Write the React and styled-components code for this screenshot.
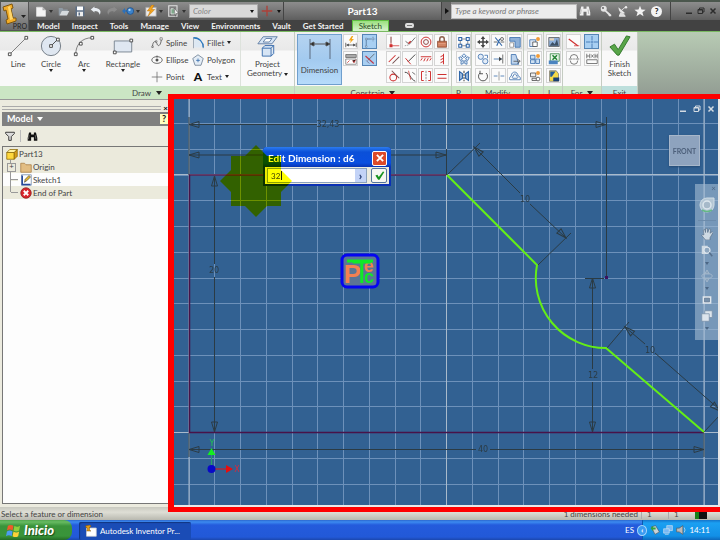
import styled, { createGlobalStyle, css } from "styled-components";

const blue = "#2f65a8";
const red = "#cf3030";
const dark = "#444444";

const iconShapes = {
  newFile: (
    <g>
      <path d="M2 3h8l4 4v8H2z" fill="#f4f4f4" stroke="#ddd" />
      <path d="M10 3v4h4" fill="#aaa" />
    </g>
  ),
  open: (
    <g>
      <path d="M1 4h5l1 2h6v2H5l-3 6H1z" fill="#8f9aa3" />
      <path d="M5 8h10l-3 6H2z" fill="#d5dade" />
    </g>
  ),
  save: (
    <g>
      <path d="M2 2h12v13H2z" fill="#5c6f86" />
      <path d="M4 2h8v5H4z" fill="#fff" />
      <path d="M4 9h8v6H4z" fill="#eee" />
      <path d="M6 10h2v4H6z" fill="#5c6f86" />
    </g>
  ),
  undo: (
    <path d="M6 2L1 6l5 4V8c4 0 6 1 7 5 3-6-1-9-7-9z" fill="#e8edf2" />
  ),
  redo: (
    <path d="M10 2l5 4-5 4V8c-4 0-6 1-7 5-3-6 1-9 7-9z" fill="#8c8c8c" />
  ),
  returnTo: (
    <g>
      <path d="M0 8l4-4v3h3v2H4v3z" fill="#2d70b8" />
      <circle cx="11" cy="8" r="4.5" fill="#3d84cc" stroke="#1a4f8c" />
      <circle cx="10" cy="6.5" r="1.5" fill="#b5d8f5" />
    </g>
  ),
  update: (
    <g>
      <path d="M1 3h14v12H1z" fill="#ececec" stroke="#999" />
      <path d="M9 0L3 8h4l-3 7 9-9H9l3-6z" fill="#f2a41f" stroke="#b36a00" strokeWidth=".6" />
    </g>
  ),
  select: (
    <g>
      <path d="M1 1h11v14H1z" fill="none" stroke="#e0e0e0" strokeWidth="1.5" />
      <path d="M4 5h5v7H4z" fill="#7ea78a" stroke="#eee" />
      <path d="M8 4l6 7-3 .3L10 15z" fill="#fff" stroke="#444" strokeWidth=".7" />
    </g>
  ),
  plus: <path d="M8 1v14M1 8h14" stroke="#ad4038" strokeWidth="1.8" />,
  binoculars: (
    <g>
      <path d="M3 2h3v3h4V2h3l2 8v4h-5V9H6v5H1v-4z" fill="currentColor" />
      <path d="M3 6l-1 6M12 6l1 6" stroke="#999" strokeWidth=".8" />
    </g>
  ),
  key: (
    <g>
      <circle cx="5" cy="5" r="4" fill="#e4e4e4" />
      <circle cx="4" cy="4" r="1.2" fill="#555" />
      <path d="M7 6l8 7v2h-3l-1-2-1-1-4-4z" fill="#e4e4e4" />
    </g>
  ),
  satellite: (
    <g>
      <path d="M2 3c0 6 4 9 9 8z" fill="#e8e8e8" />
      <path d="M6 7l5-4M5 10l-2 5h8l-3-4" stroke="#e8e8e8" fill="#ddd" strokeWidth="1.2" />
      <circle cx="12" cy="3" r="1.6" fill="#eee" />
    </g>
  ),
  star: (
    <path d="M8 1l2 5 5.500.300-4.300 3.500L12.700 15 8 12l-4.700 3 1.500-5.200L.500 6.300 6 6z" fill="#f2f2f2" />
  ),
  minimize: <path d="M2 11h12v3H2z" fill="currentColor" />,
  restore: (
    <path d="M5 5V2h9v8h-3M2 5h9v8H2zM2 6h9" fill="none" stroke="currentColor" strokeWidth="2" />
  ),
  close: <path d="M3 3l10 10M13 3L3 13" stroke="currentColor" strokeWidth="3" />,
  line: (
    <g fill="#fff" stroke={dark}>
      <path d="M3 21L21 3" stroke="#777" />
      <path d="M1.500 19.500h3v3h-3zM19.500 1.500h3v3h-3z" />
    </g>
  ),
  circle: (
    <g fill="#fff" stroke={dark}>
      <circle cx="12" cy="12" r="10.5" fill="#dfe7f1" stroke="#6c7680" />
      <path d="M12 12l7-7" />
      <path d="M10.500 10.500h3v3h-3zM18 3.500h3v3h-3z" />
    </g>
  ),
  arc: (
    <g fill="#fff" stroke={dark}>
      <path d="M3 21C3 11 9 3 21 3" fill="none" stroke="#777" />
      <path d="M1.500 19.500h3v3h-3zM19.500 1.500h3v3h-3zM7 8h3v3H7z" />
    </g>
  ),
  rectangle: (
    <g fill="#fff" stroke={dark}>
      <path d="M2.500 6.500h19v12h-19z" fill="#dfe7f1" stroke="#77828e" />
      <path d="M1.500 17.500h3v3h-3zM19.500 4.500h3v3h-3z" />
    </g>
  ),
  spline: (
    <g fill="#fff" stroke={dark}>
      <path d="M2 14C2 4 7 5 8 9s5 4 6-7" fill="none" />
      <path d="M1 12h2v2H1zM12 1h3v3h-3zM6 5h2v2H6z" strokeWidth=".7" />
    </g>
  ),
  ellipse: (
    <g stroke={dark} fill="none">
      <ellipse cx="8" cy="8" rx="7" ry="4.5" />
      <circle cx="8" cy="8" r="1.5" fill={dark} />
      <path d="M8 2v3" />
    </g>
  ),
  point: <path d="M8 1v14M1 8h14" stroke="#666" />,
  fillet: (
    <g fill="none">
      <path d="M3 3c7 1 10 6 10 11H3z" fill="#dde8f3" />
      <path d="M2 15V1h5M15 15V9" stroke="#8795a5" />
      <path d="M2 1c8 0 13 6 13 13" stroke="#2878c0" strokeWidth="1.8" />
    </g>
  ),
  polygon: (
    <g>
      <path d="M8 1l7 5-3 9H4L1 6z" fill="#e4edf6" stroke="#62748a" />
      <path d="M8 6v5M5.500 8.500h5" stroke={blue} />
    </g>
  ),
  project: (
    <g>
      <path d="M7 2h16l-6 8H1z" fill="#d7e5f5" stroke="#5878a0" />
      <path d="M10 4h7l-3 4H7z" fill="#fff" stroke="#5878a0" />
      <path d="M6 15h10v9H6zM6 15l3-3h10l-3 3M19 12v9l-3 3" fill="#d7e5f5" stroke={blue} />
    </g>
  ),
  dimension: (
    <g stroke="#555">
      <path d="M2 1v20M22 1v20" stroke="#687b92" strokeWidth="1.2" />
      <path d="M3 6h18" />
      <path d="M2 6l4-2v4zM22 6l-4-2v4z" fill="#222" />
    </g>
  ),
  autoDimension: (
    <g>
      <path d="M9 0L5 6h3l-2 4 6-6H9l2-4z" fill="#f3a619" />
      <path d="M1 9v6M15 9v6M2 12h12" stroke={dark} />
      <path d="M2 12l3-2v4zM14 12l-3-2v4z" fill={dark} />
    </g>
  ),
  showConstraints: (
    <g>
      <path d="M1 2h14v4H1z" fill="#aaa" stroke="#666" />
      <path d="M1 8h14v7H1z" fill="#fff" stroke="#777" />
      <path d="M3 13l3-3M10 10l2 3 2-4" stroke={red} />
    </g>
  ),
  inference: (
    <g>
      <path d="M3 15V4h6" fill="none" stroke="#4a6c92" />
      <path d="M2 3h2v2H2zM2 13h2v2H2z" fill="#fff" stroke="#4a6c92" strokeWidth=".7" />
      <path d="M12 1v6M9 4h6" stroke="#58708b" strokeDasharray="1.5 1" />
    </g>
  ),
  persistence: (
    <g fill="none">
      <path d="M5 10L14 1" stroke="#555" />
      <path d="M2 4l11 10" stroke="#c03848" strokeWidth="1.5" />
      <path d="M3 10l4 4" stroke="#6c5a80" />
    </g>
  ),
  coincident: (
    <g>
      <path d="M4 1v12h11" stroke={red} fill="none" />
      <path d="M2 11h4v4H2z" fill={red} />
      <path d="M4 1v8" stroke="#777" />
    </g>
  ),
  collinear: (
    <g>
      <path d="M2 7l5 4 8-9" stroke={dark} fill="none" />
      <path d="M6 10l3-3" stroke={red} strokeWidth="2" />
      <path d="M1 13l5-1" stroke="#888" strokeDasharray="2 1" />
    </g>
  ),
  concentric: (
    <g fill="none" stroke={red} strokeWidth="1.3">
      <circle cx="8" cy="8" r="6.5" />
      <circle cx="8" cy="8" r="3.2" stroke="#8c4545" />
    </g>
  ),
  lock: (
    <g>
      <path d="M5 8V4c0-4 6-4 6 0v4" fill="none" stroke="#8f6250" strokeWidth="2" />
      <path d="M2 7h12v8H2z" fill="#c67250" stroke="#8b4f38" />
      <path d="M3 10h10M3 12h10" stroke="#e8a88c" />
    </g>
  ),
  parallel: (
    <g strokeWidth="1.4">
      <path d="M1 12l9-9" stroke={red} />
      <path d="M6 14l9-9" stroke="#704848" />
    </g>
  ),
  perpendicular: (
    <g fill="none" strokeWidth="1.3">
      <path d="M5 12L15 2" stroke={dark} />
      <path d="M2 7l7 8" stroke={red} />
    </g>
  ),
  horizontal: (
    <path d="M1 5h14M1 10l2-3M5 11l2-4M9 11l2-4M13 10l2-3" stroke={red} strokeWidth="1.3" />
  ),
  vertical: (
    <path d="M10 1v14M10 3L6 5M10 7L6 9M10 11l-4 2" stroke={red} strokeWidth="1.3" />
  ),
  tangent: (
    <g fill="none" strokeWidth="1.4">
      <circle cx="7" cy="10" r="4.5" stroke={red} />
      <path d="M5 1l10 10" stroke="#815050" />
    </g>
  ),
  smooth: (
    <g fill="none">
      <path d="M1 3c7 0 7 9 14 12" stroke={dark} strokeWidth="1.3" />
      <path d="M6 1l3 12" stroke={red} />
      <path d="M11 3l4 3" stroke={dark} />
    </g>
  ),
  symmetric: (
    <g fill="none">
      <path d="M5 2H2v12h3M11 2h3v12h-3" stroke={red} strokeWidth="1.3" />
      <path d="M8 1v14" stroke="#777" strokeDasharray="3 1" />
    </g>
  ),
  equal: <path d="M2 6h12M2 11h12" stroke={red} strokeWidth="1.4" />,
  rectPattern: (
    <g fill="#f2f7ff" stroke={blue} strokeWidth="1.4">
      <path d="M3 4h10v9H3z" fill="none" stroke="#444" strokeWidth=".8" />
      <path d="M1 2h4v4H1zM11 2h4v4h-4zM1 11h4v4H1zM11 11h4v4h-4z" />
    </g>
  ),
  circPattern: (
    <g fill="#e9f1fa" stroke={blue}>
      <path d="M8 1l3 3-3 2-3-2zM1 6l3-1 2 3-3 2zM15 6l-3-1-2 3 3 2zM4 11l3-1v4l-3 1zM12 11l-3-1v4l3 1z" />
    </g>
  ),
  mirror: (
    <g fill="none" stroke={blue} strokeWidth="1.4">
      <path d="M2 2v12l4-3V5zM14 2v12l-4-3V5z" fill="#9bb9dc" />
      <path d="M8 1v14" stroke={dark} strokeDasharray="3 1" />
    </g>
  ),
  move: (
    <path
      d="M8 0l3 4H9v3h3V5l4 3-4 3V9H9v3h2l-3 4-3-4h2V9H4v2L0 8l4-3v2h3V4H5z"
      fill={dark}
    />
  ),
  trim: (
    <g stroke={dark} fill="none">
      <path d="M1 8h5M10 8h5" />
      <path d="M3 2l9 11M9 4l-4 9" stroke={blue} strokeWidth="1.5" />
      <circle cx="12" cy="4" r="2" />
    </g>
  ),
  scale: (
    <g fill="#8fb1d8" stroke={blue}>
      <path d="M1 2h14v13H8V7H1z" />
      <path d="M1 9h5v6H1z" fill="#fff" stroke="#888" />
    </g>
  ),
  copy: (
    <g fill="#e4edf8" stroke={blue}>
      <circle cx="5" cy="5" r="3.5" />
      <circle cx="11" cy="11" r="3.5" />
      <path d="M10 3h4v4" fill="none" />
    </g>
  ),
  extend: (
    <g fill="none">
      <path d="M1 8h11" stroke={blue} />
      <path d="M13 2v12" stroke={dark} />
      <path d="M12 8L8 5v6z" fill={dark} />
    </g>
  ),
  stretch: (
    <g>
      <path d="M3 2h6l4 13H3z" fill="#bdd3ed" stroke={blue} />
      <path d="M6 11h8M11 8l4 3-4 3" stroke={dark} fill="none" />
    </g>
  ),
  rotate: (
    <g fill="none" stroke={dark} strokeWidth="1.2">
      <path d="M4 4a6 6 0 1 0 8 0" />
      <path d="M4 1v4h4" />
    </g>
  ),
  split: (
    <g>
      <path d="M1 8h5M10 8h5" stroke={blue} />
      <path d="M8 2v12" stroke="#888" />
    </g>
  ),
  offset: (
    <g fill="none" stroke={blue}>
      <path d="M1 13h14c1-4-2-5-3-5 0-7-9-7-9 0-2 1-3 3-2 5z" />
      <path d="M5 11h6c2-1-1-3-1-3 0-4-5-3-4 0-2 0-2 2-1 3z" />
    </g>
  ),
  makePart: (
    <g>
      <path d="M1 5h8v9H1z" fill="#dfe8f5" stroke={blue} />
      <path d="M5 8h6v6H5z" fill="#fff" stroke={dark} />
      <circle cx="12" cy="4" r="2.6" fill="#f09b38" />
    </g>
  ),
  makeComponents: (
    <g>
      <path d="M2 3h6v5H2zM2 9h6v5H2zM9 8h5v6H9z" fill="#cde0f2" stroke={blue} />
      <circle cx="12" cy="4" r="2.6" fill="#f09b38" />
    </g>
  ),
  createBlock: (
    <g>
      <path d="M2 4h7v5H2zM4 11h8v3H4z" fill="#eee" stroke={dark} />
      <circle cx="12" cy="4" r="2.6" fill="#f09b38" />
      <circle cx="12" cy="12" r="2.5" fill="#fff" stroke={dark} />
    </g>
  ),
  image: (
    <g>
      <path d="M1 2h14v12H1z" fill="#8fb0d9" stroke="#555" />
      <path d="M2 13l4-5 3 3 3-7 2 9z" fill="#3e5064" />
      <path d="M2 3h6v3H2z" fill="#e8d6b8" />
    </g>
  ),
  points: (
    <g>
      <path d="M3 1h12v10H3z" fill="#e9f6e9" stroke="#287c35" />
      <path d="M6 3l6 6M12 3L6 9" stroke="#238233" strokeWidth="2" />
      <path d="M1 10h12v5H1z" fill="#4b84c0" />
    </g>
  ),
  acad: (
    <g>
      <path d="M2 1h9l3 4v10H2z" fill="#f5da48" stroke="#777" />
      <path d="M3 2h7L5 9H3z" fill="#245d9c" />
      <path d="M7 10h8v5H7z" fill="#183f73" />
    </g>
  ),
  construction: (
    <g>
      <path d="M1 4l12 9" stroke={red} strokeWidth="1.6" />
      <path d="M8 13h7" stroke={red} />
    </g>
  ),
  centerline: (
    <g fill="none" stroke="#555">
      <path d="M3 7a5 5 0 0 1 10 0M3 10a5 5 0 0 0 10 0" />
      <path d="M1 8h14" strokeDasharray="5 1 2 1" />
    </g>
  ),
  centerpoint: <path d="M8 0v6M8 10v6M0 8h6M10 8h6M8 7v2M7 8h2" stroke={blue} />,
  driven: (
    <g stroke="#555" fill="none">
      <path d="M1 1v6M5 1v6M1 4h4M7 2l3 4M10 2L7 6M12 1v6M15 1v6M12 4h3" />
      <path d="M1 9h14v5H1z" />
    </g>
  ),
  filter: <path d="M1 2h14v2l-5 5v6H6V9L1 4z" fill="#ddd" stroke="#333" strokeWidth="1.5" />,
  cube: (
    <g stroke="#8a6500">
      <path d="M1 6h10v9H1z" fill="#ffd83c" />
      <path d="M1 6l4-4h10l-4 4z" fill="#fff3a0" />
      <path d="M15 2v9l-4 4V6z" fill="#d69d19" />
    </g>
  ),
  folder: <path d="M1 3h5l2 2h7v10H1z" fill="#e2bd82" stroke="#a87c43" />,
  sketch: (
    <g>
      <path d="M2 1h13v14H2z" fill="#fff" stroke="#6f86a5" />
      <path d="M3 2v12h11" stroke="#26499c" fill="none" strokeWidth="2" />
      <path d="M6 11l1-4 5-5 2 2-5 5z" fill="#e9b72c" stroke="#554" />
    </g>
  ),
  end: (
    <g>
      <circle cx="8" cy="8" r="7" fill="#d9252b" stroke="#8c1c1f" />
      <path d="M5 5l6 6M11 5l-6 6" stroke="#fff" strokeWidth="2.4" />
    </g>
  ),
  check: (
    <path d="M1 13l5-3 4 6L19 1l4 1-12 20H9z" fill="#58a548" stroke="#2e7429" />
  ),
  okCheck: <path d="M2 8l3-1 2 3 6-8 2 1-7 11H6z" fill="#17921e" />,
  wheel: (
    <g>
      <path d="M8 1h7v7a7 7 0 1 1-7-7z" fill="#b4c6d4" stroke="#d0dde6" />
      <circle cx="8" cy="8" r="4" fill="#a6b9c9" stroke="#dce6ed" strokeWidth="1.5" />
      <path d="M3 13q5 3 10 0" stroke="#65b887" fill="none" strokeWidth="1.5" />
    </g>
  ),
  hand: (
    <path
      d="M4 9L3 3l2-1 1 4V1l2-1 1 6 2-5 2 1-1 5 3-2 1 1-4 7v3H6l-5-6 1-1z"
      fill="#cfdae3"
      stroke="#51667d"
      strokeWidth=".8"
    />
  ),
  zoom: (
    <g>
      <path d="M1 1h8v11H1z" fill="#cfdae3" />
      <circle cx="8" cy="7" r="4" fill="#8fa8c0" stroke="#dde6ee" strokeWidth="1.5" />
      <path d="M11 10l4 5" stroke="#56708c" strokeWidth="2" />
    </g>
  ),
  orbit: (
    <g fill="none" stroke="#a9bccd">
      <ellipse cx="8" cy="8" rx="7" ry="3" />
      <path d="M8 0l3 5H5zM8 16l3-5H5z" fill="#8ba4bd" />
    </g>
  ),
  lookAt: (
    <g>
      <path d="M1 2h14v12H1z" fill="#e1e7ed" />
      <path d="M4 5h8v6H4z" fill="#7891ab" stroke="#536b86" />
    </g>
  ),
  viewBox: (
    <g fill="#dde5ec" stroke="#788fa7">
      <path d="M5 1h10v9H5z" />
      <path d="M1 5h10v10H1z" />
    </g>
  ),
  windows: (
    <g>
      <path d="M2 3q3-2 6 0L7 8Q4 6 1 8z" fill="#f05a2a" />
      <path d="M9 3q3 2 6 0l-1 5q-3 2-6 0z" fill="#8fd03b" />
      <path d="M1 9q3-2 6 0l-1 5q-3-2-6 0z" fill="#4c9bf2" />
      <path d="M8 9q3 2 6 0l-1 5q-3 2-6 0z" fill="#fbd13a" />
    </g>
  ),
  inventor: (
    <g>
      <path d="M2 4h13v11H2z" fill="#fff" stroke="#ccc" />
      <path d="M1 1l6-1 1 2-2 1v4l2 1H2l1-1V4L1 3z" fill="#e09a16" stroke="#7c4d08" strokeWidth=".6" />
    </g>
  ),
  device: (
    <g>
      <path d="M2 3l7-2 6 10-7 4z" fill="#c8d3d8" stroke="#4d5962" />
      <path d="M1 5l4-4v3h4v3H5v3z" fill="#35a33d" />
    </g>
  ),
  network: (
    <g fill="#78b9f5" stroke="#d6e5ef">
      <path d="M6 1h9v8H6z" />
      <path d="M1 6h9v7H1zM3 15h6" />
    </g>
  ),
  volume: (
    <g>
      <path d="M1 5h4l6-4v14l-6-4H1z" fill="#bbb" stroke="#555" />
      <path d="M13 4q3 4 0 8" stroke="#eee" fill="none" />
    </g>
  ),
};

const Icon = ({ name, size = 12, box = 16 }) => (
  <Svg width={size} height={size} viewBox={`0 0 ${box} ${box}`} aria-hidden="true">
    {iconShapes[name]}
  </Svg>
);

const tabs = ["Model", "Inspect", "Tools", "Manage", "View", "Environments", "Vault", "Get Started"];

const quickTools = [
  ["newFile", true],
  ["open"],
  ["save"],
  ["undo"],
  ["redo"],
  ["returnTo", true],
  ["update", true],
  ["select", true],
];

const constraints = [
  "coincident", "collinear", "concentric", "lock",
  "parallel", "perpendicular", "horizontal", "vertical",
  "tangent", "smooth", "symmetric", "equal",
];

const modifyTools = [
  "move", "trim", "scale",
  "copy", "extend", "stretch",
  "rotate", "split", "offset",
];

const ToolGrid = ({ names, columns, gap, active }) => (
  <Tools $columns={columns} $gap={gap}>
    {names.map((name) => (
      <Tool key={name} aria-label={name} $active={name === active}>
        <Icon name={name} />
      </Tool>
    ))}
  </Tools>
);

const TitleBar = () => (
  <Title>
    <QuickAccess>
      {quickTools.map(([name, more]) => (
        <QuickButton key={name} aria-label={name} $more={more}>
          <Icon name={name} />
          {more && <Caret $color="#333" />}
        </QuickButton>
      ))}
    </QuickAccess>
    <ColorBox>
      <select aria-label="Color" defaultValue="Color">
        <option>Color</option>
      </select>
      <Caret $color="#111" />
    </ColorBox>
    <QuickEnd>
      <Icon name="plus" />
      <Caret $color="#111" />
    </QuickEnd>
    <DocumentName>Part13</DocumentName>
    <SearchArrow aria-label="Expand search" />
    <Search type="search" aria-label="Search help" placeholder="Type a keyword or phrase" />
    <HelpTools>
      {["binoculars", "key", "satellite", "star"].map((name) => (
        <PlainButton key={name} aria-label={name}>
          <Icon name={name} />
        </PlainButton>
      ))}
      <HelpButton>?</HelpButton>
    </HelpTools>
    <WindowButtons>
      {["minimize", "restore", "close"].map((name) => (
        <PlainButton key={name} aria-label={name}>
          <Icon name={name} size={8} />
        </PlainButton>
      ))}
    </WindowButtons>
  </Title>
);

const Ribbon = () => (
  <RibbonBar>
    <Panel $width={295}>
      <PanelBody $pad="0">
        <BigTool $width={36}>
          <Icon name="line" size={22} box={24} />
          Line
        </BigTool>
        <BigTool $width={30}>
          <Icon name="circle" size={22} box={24} />
          Circle
          <Caret $color="#222" />
        </BigTool>
        <BigTool $width={36}>
          <Icon name="arc" size={22} box={24} />
          Arc
          <Caret $color="#222" />
        </BigTool>
        <BigTool $width={42}>
          <Icon name="rectangle" size={22} box={24} />
          Rectangle
          <Caret $color="#222" />
        </BigTool>
        <SmallTools>
          <SmallTool><Icon name="spline" />Spline</SmallTool>
          <SmallTool><Icon name="fillet" />Fillet <Caret $color="#222" /></SmallTool>
          <SmallTool><Icon name="ellipse" />Ellipse</SmallTool>
          <SmallTool><Icon name="polygon" />Polygon</SmallTool>
          <SmallTool><Icon name="point" />Point</SmallTool>
          <SmallTool><LetterIcon>A</LetterIcon>Text <Caret $color="#222" /></SmallTool>
        </SmallTools>
        <ProjectTool>
          <Icon name="project" size={22} box={25} />
          <span>Project</span>
          <span>Geometry <Caret $color="#222" /></span>
        </ProjectTool>
      </PanelBody>
      <PanelTitle>Draw <Caret $color="#222" $large /></PanelTitle>
    </Panel>
    <Panel $width={157}>
      <PanelBody $pad="2px 2px 0 2px">
        <DimensionTool>
          <Icon name="dimension" size={24} box={24} />
          Dimension
        </DimensionTool>
        <Tools $columns={1} $gap={2}>
          <Tool aria-label="Automatic dimension"><Icon name="autoDimension" /></Tool>
          <Tool aria-label="Show constraints"><Icon name="showConstraints" /></Tool>
        </Tools>
        <Tools $columns={1} $gap={2} $left={4}>
          <Tool $active aria-label="Inference"><Icon name="inference" /></Tool>
          <Tool $active aria-label="Persistence"><Icon name="persistence" /></Tool>
        </Tools>
        <Spacer />
        <ToolGrid names={constraints} columns={4} gap={1} />
      </PanelBody>
      <PanelTitle>Constrain <Caret $color="#222" $large /></PanelTitle>
    </Panel>
    <Panel $width={20}>
      <PanelBody $pad="2px 0 0 3px">
        <ToolGrid names={["rectPattern", "circPattern", "mirror"]} columns={1} gap={1} />
      </PanelBody>
      <PanelTitle $start>P</PanelTitle>
    </Panel>
    <Panel $width={52}>
      <PanelBody $pad="2px 0 0 2px">
        <ToolGrid names={modifyTools} columns={3} gap={1} />
      </PanelBody>
      <PanelTitle>Modify</PanelTitle>
    </Panel>
    <Panel $width={20}>
      <PanelBody $pad="2px 0 0 2px">
        <ToolGrid names={["makePart", "makeComponents", "createBlock"]} columns={1} gap={1} />
      </PanelBody>
      <PanelTitle $start>L</PanelTitle>
    </Panel>
    <Panel $width={19}>
      <PanelBody $pad="2px 0 0 1px">
        <ToolGrid names={["image", "points", "acad"]} columns={1} gap={1} />
      </PanelBody>
      <PanelTitle $start>I</PanelTitle>
    </Panel>
    <Panel $width={39}>
      <PanelBody $pad="2px 0 0 2px">
        <ToolGrid
          names={["construction", "centerpoint", "centerline", "driven"]}
          columns={2}
          gap={3}
          active="centerpoint"
        />
      </PanelBody>
      <PanelTitle>For <Caret $color="#222" $large /></PanelTitle>
    </Panel>
    <Panel $width={36} $exit>
      <PanelBody $pad="0">
        <BigTool $width={36}>
          <Icon name="check" size={22} box={24} />
          <span>Finish</span>
          <span>Sketch</span>
        </BigTool>
      </PanelBody>
      <PanelTitle>Exit</PanelTitle>
    </Panel>
  </RibbonBar>
);

const ModelBrowser = () => (
  <Browser>
    <Grip>
      <i />
      <button aria-label="Close browser">×</button>
    </Grip>
    <BrowserTitle>
      Model <Caret $color="#fff" $large />
      <HelpTag aria-label="Help">?</HelpTag>
    </BrowserTitle>
    <BrowserTools>
      <PlainButton aria-label="Filter"><Icon name="filter" size={10} /></PlainButton>
      <Divider />
      <PlainButton aria-label="Find"><Icon name="binoculars" size={11} /></PlainButton>
    </BrowserTools>
    <Tree>
      <TreeItem $root $shade><Icon name="cube" />Part13</TreeItem>
      <TreeItem $shade><Branch $expand />
        <Icon name="folder" />Origin</TreeItem>
      <TreeItem><Branch />
        <Icon name="sketch" />Sketch1</TreeItem>
      <TreeItem $shade><Branch $last />
        <Icon name="end" />End of Part</TreeItem>
    </Tree>
  </Browser>
);

const gridStep = 25.75;
const columns = Array.from({ length: 21 }, (_, i) => 189 + i * gridStep);
const rows = Array.from({ length: 15 }, (_, i) => 123.5 + i * gridStep);

const Arrow = ({ x, y, angle }) => (
  <path d="M0 0L-10-3V3Z" fill="none" transform={`translate(${x} ${y}) rotate(${angle})`} />
);

const Drawing = () => (
  <DrawingSvg role="img" aria-label="Sketch geometry">
    <g transform="translate(-174 -99)" fill="none">
      <g stroke="#6d91ba" shapeRendering="crispEdges">
        {columns.map((x) => (
          <path key={x} d={`M${x} 99V900`} />
        ))}
        {rows.map((y) => (
          <path key={y} d={`M174 ${y}H2000`} />
        ))}
      </g>
      <g stroke="#a9bacb">
        <path d="M189 99V900M446.500 99V900M704 99V900M174 174.500H2000M174 432.500H2000" />
      </g>
      <g stroke="#2b3b44">
        <path d="M189 124.500H317M339 124.500H606M189 117V175M606.500 117V278" />
        <path d="M189 155H446M446.500 149V175" />
        <path d="M214.500 177V264M214.500 277V432" />
        <path d="M189 449.500H476M490 449.500H704M189 433V457M704 433V457" />
        <path d="M475 148L520 193M530 204L566 238M447 175L480 143M538 265L571 233" />
        <path d="M592.500 278V369M592.500 382V432M585 278.500H604" />
        <path d="M625 327L645 344M655 353L720 410M607 348L629 322M704 432L720 415" />
        <Arrow x={189} y={124.5} angle={180} />
        <Arrow x={606} y={124.5} angle={0} />
        <Arrow x={189} y={155} angle={180} />
        <Arrow x={446} y={155} angle={0} />
        <Arrow x={214.5} y={176} angle={-90} />
        <Arrow x={214.5} y={432} angle={90} />
        <Arrow x={189} y={449.5} angle={180} />
        <Arrow x={704} y={449.5} angle={0} />
        <Arrow x={474} y={147} angle={225} />
        <Arrow x={566} y={238} angle={45} />
        <Arrow x={592.5} y={278} angle={-90} />
        <Arrow x={592.5} y={432} angle={90} />
        <Arrow x={625} y={327} angle={221} />
        <Arrow x={720} y={411} angle={41} />
      </g>
      <path d="M446 175H189.500V432.500H704" stroke="#481348" strokeWidth="1.5" />
      <path
        d="M447 175L537 265A70 70 0 0 0 606 348L704 432"
        stroke="#64ee16"
        strokeWidth="2"
      />
      <path d="M605 276h3v3h-3z" fill="#3c1360" />
      <g fill="#2b3b44" fontSize="8" textAnchor="middle" fontFamily="DejaVu Sans, sans-serif">
        <text x="328" y="127">32,43</text>
        <text x="214" y="273">20</text>
        <text x="525" y="202">10</text>
        <text x="593" y="378">12</text>
        <text x="650" y="353">10</text>
        <text x="483" y="452">40</text>
      </g>
      <path d="M211.500 466V454" stroke="#25a06a" />
      <path d="M211.500 448l4 7h-8z" fill="#13ef20" />
      <path d="M214 469h12" stroke="#e11" />
      <path d="M226 465l7 4-7 4z" fill="#e80e0e" />
      <circle cx="211.5" cy="469" r="4" fill="#0808c8" />
      <g fontSize="8" textAnchor="middle" fontFamily="DejaVu Sans, sans-serif">
        <text x="212" y="446" fill="#1fc850">Y</text>
        <text x="237" y="472" fill="#d8283c">X</text>
      </g>
      <rect x="342" y="255" width="36" height="32" rx="5" fill="#5c7595" stroke="#0505f0" strokeWidth="3" />
      <g fontFamily="Liberation Sans, sans-serif" fontWeight="700">
        <text x="344" y="283" fontSize="26" fill="#f58052">P</text>
        <text x="364" y="272" fontSize="18" fill="#f58052">e</text>
        <text x="352" y="283" fontSize="32" fontWeight="400" fill="#10ea28">T</text>
        <text x="364" y="283" fontSize="18" fill="#10ea28">c</text>
      </g>
      <path d="M347 261H373" stroke="#10ea28" strokeWidth="3" />
    </g>
  </DrawingSvg>
);

const Canvas = () => (
  <CanvasArea>
    <Drawing />
    <ViewButtons>
      {["minimize", "restore", "close"].map((name) => (
        <PlainButton key={name} aria-label={`${name} view`}>
          <Icon name={name} size={8} />
        </PlainButton>
      ))}
    </ViewButtons>
    <ViewCube>FRONT</ViewCube>
    <NavBar>
      <small>×</small>
      <Icon name="wheel" size={16} />
      <hr />
      <Icon name="hand" />
      <Icon name="zoom" />
      <Caret $color="#4c6684" />
      <Icon name="orbit" />
      <Caret $color="#4c6684" />
      <Icon name="lookAt" size={10} />
      <Icon name="viewBox" />
      <Caret $color="#4c6684" />
    </NavBar>
    <Dialog role="dialog" aria-label="Edit Dimension">
      <DialogTitle>
        Edit Dimension : d6
        <CloseDialog type="button" aria-label="Close">
          <Icon name="close" size={10} />
        </CloseDialog>
      </DialogTitle>
      <DialogBody>
        <ValueBox>
          <input aria-label="Dimension value" defaultValue="32" />
          <i />
          <button type="button" aria-label="More values">›</button>
        </ValueBox>
        <Accept type="button" aria-label="Accept">
          <Icon name="okCheck" size={11} />
        </Accept>
      </DialogBody>
    </Dialog>
    <Highlight width="72" height="72" viewBox="0 0 72 72" aria-hidden="true">
      <path d="M11 11H61V61H11ZM36 0L72 36L36 72L0 36Z" fill="#ff0" />
    </Highlight>
  </CanvasArea>
);

export default function App() {
  return (
    <Screen>
      <GlobalStyle />
      <Header>
        <AppButton aria-label="Application menu">
          <svg width="28" height="31" viewBox="0 0 28 31" aria-hidden="true">
            <path d="M2 5l9-3 1 4-2 1 2 9 3 0v3l-9 3-1-4 2-1-2-9-2 1z" fill="#f2ad28" stroke="#7d560f" />
            <path d="M7 5l2-1 3 13-3 1z" fill="#ffd66b" />
            <path d="M20 13h5l-2.500 3z" fill="#222" />
          </svg>
          <span>PRO</span>
        </AppButton>
        <HeaderRows>
          <TitleBar />
          <Tabs>
            {tabs.map((tab) => (
              <Tab key={tab}>{tab}</Tab>
            ))}
            <Tab $current>Sketch</Tab>
            <RibbonToggle aria-label="Minimize ribbon" />
          </Tabs>
        </HeaderRows>
      </Header>
      <Ribbon />
      <Workspace>
        <ModelBrowser />
        <Canvas />
        <Frame />
      </Workspace>
      <Status>
        <span>Select a feature or dimension</span>
        <Needed>1 dimensions needed</Needed>
        <Count>1</Count>
        <Count>1</Count>
        <Meter />
      </Status>
      <Taskbar>
        <Start><Icon name="windows" size={15} />Inicio</Start>
        <Task><Icon name="inventor" />Autodesk Inventor Pr...</Task>
        <Language>ES</Language>
        <Tray>
          <TrayArrow aria-label="Show hidden icons">‹</TrayArrow>
          <Icon name="device" size={10} />
          <Icon name="network" size={10} />
          <Icon name="volume" size={10} />
          <time>14:11</time>
        </Tray>
      </Taskbar>
    </Screen>
  );
}

const GlobalStyle = createGlobalStyle`
  * {
    box-sizing: border-box;
  }
  body {
    margin: 0;
    font-family: Lato, "Liberation Sans", sans-serif;
    font-size: 8px;
    line-height: 10px;
    color: #444;
  }
  button, input, select {
    font: inherit;
    color: inherit;
    margin: 0;
    padding: 0;
    border: 0;
    background: none;
  }
`;

const Svg = styled.svg`
  display: block;
  flex: none;
`;

const Screen = styled.div`
  min-height: 100vh;
  display: flex;
  flex-direction: column;
  background: #ecebdf;
  overflow: hidden;
`;

const Caret = styled.i`
  flex: none;
  display: inline-block;
  border: solid transparent;
  border-width: ${(p) => (p.$large ? "4px 3px 0" : "3px 2px 0")};
  border-top-color: ${(p) => p.$color};
`;

const PlainButton = styled.button`
  display: flex;
  align-items: center;
  justify-content: center;
`;

const Header = styled.header`
  display: flex;
  height: 32px;
  background: #424242;
  border-bottom: 1px solid #79b961;
`;

const AppButton = styled.button`
  width: 29px;
  flex: none;
  position: relative;
  border: 1px solid #555;
  border-top: 2px solid #4b574d;
  background: linear-gradient(#adadad, #6a6a6a);
  overflow: hidden;

  svg {
    display: block;
  }
  span {
    position: absolute;
    right: 1px;
    bottom: 0;
    font-size: 7px;
    line-height: 8px;
    color: #222;
  }
`;

const HeaderRows = styled.div`
  flex: 1;
  min-width: 0;
`;

const Title = styled.div`
  height: 20px;
  display: flex;
  align-items: center;
  border-top: 2px solid #4b574d;
  background: linear-gradient(#8d8d8d, #5e5e5e);
  color: #333;
`;

const QuickAccess = styled.div`
  display: flex;
  align-items: center;
  gap: 3px;
  width: 160px;
  padding-left: 6px;
`;

const QuickButton = styled(PlainButton)`
  gap: 2px;
  width: ${(p) => (p.$more ? "20px" : "13px")};
  justify-content: flex-start;
`;

const ColorBox = styled.label`
  display: flex;
  align-items: center;
  width: 69px;
  height: 14px;
  padding-right: 3px;
  background: #d9d9d9;
  border: 1px solid #aaa;

  select {
    flex: 1;
    padding-left: 3px;
    appearance: none;
    font-style: italic;
    color: #888;
  }
`;

const QuickEnd = styled.div`
  display: flex;
  align-items: center;
  align-self: stretch;
  gap: 4px;
  width: 26px;
  padding-left: 3px;
  border-right: 1px solid #444;
`;

const DocumentName = styled.h1`
  flex: 1;
  margin: 0;
  text-align: center;
  color: #fff;
  font-size: 10px;
  line-height: 12px;
`;

const SearchArrow = styled.button`
  align-self: stretch;
  width: 10px;
  background: #666;
  border-left: 1px solid #444;

  &::after {
    content: "";
    display: block;
    margin-left: 3px;
    width: 0;
    border: solid transparent;
    border-width: 3px 0 3px 4px;
    border-left-color: #111;
  }
`;

const Search = styled.input`
  width: 126px;
  height: 15px;
  padding-left: 3px;
  background: #ececec;
  border: 1px solid #bbb;
  font-style: italic;

  &::placeholder {
    color: #777;
    opacity: 1;
  }
`;

const HelpTools = styled.div`
  display: flex;
  align-items: center;
  align-self: stretch;
  gap: 5px;
  width: 94px;
  padding-left: 2px;
  color: #eee;
  border-right: 1px solid #444;

  button:first-child {
    margin-right: 4px;
  }
`;

const HelpButton = styled.button`
  width: 11px;
  height: 11px;
  border-radius: 50%;
  background: #f4f4f4;
  color: #222;
  font-weight: 900;
`;

const WindowButtons = styled.div`
  display: flex;
  gap: 4px;
  padding: 0 3px 0 14px;
  color: #2c2c2c;
  justify-content: flex-end;
`;

const Tabs = styled.nav`
  display: flex;
  height: 11px;
  padding-left: 2px;
`;

const Tab = styled.button`
  padding: 0 6px;
  color: #f2f2f2;
  font-weight: 700;
  line-height: 10px;
  white-space: nowrap;

  ${(p) =>
    p.$current &&
    css`
      margin-left: 2px;
      color: #2c4a25;
      font-weight: 400;
      background: linear-gradient(#9ae07e, #d9f3cf);
      border: 1px solid #5fbf40;
      border-bottom: 0;
    `}
`;

const RibbonToggle = styled.button`
  align-self: center;
  margin-left: 16px;
  width: 9px;
  height: 5px;
  border: 2px solid #ddd;
  border-radius: 2px;
  background: #777;
`;

const RibbonBar = styled.section`
  display: flex;
  height: 67px;
  background: linear-gradient(#b8cbb4, #909a91);
  white-space: nowrap;
`;

const PanelTitle = styled.h2`
  display: flex;
  flex: none;
  align-items: center;
  justify-content: ${(p) => (p.$start ? "flex-start" : "center")};
  gap: 5px;
  height: 13px;
  margin: 0;
  padding: 0 4px;
  font-size: 8px;
  font-weight: 400;
`;

const Panel = styled.div`
  flex: none;
  display: flex;
  flex-direction: column;
  width: ${(p) => p.$width}px;
  background: linear-gradient(#f0f0f0, #e9e9e9 18px, #f9f9f9 19px);
  border-right: 1px solid #c5ccc2;

  ${PanelTitle} {
    background: ${(p) => (p.$exit ? "#bddfdc" : "#cbe6c4")};
  }
`;

const PanelBody = styled.div`
  display: flex;
  flex: 1;
  padding: ${(p) => p.$pad};
`;

const BigTool = styled.button`
  display: flex;
  flex-direction: column;
  align-items: center;
  width: ${(p) => p.$width}px;
  padding-top: 3px;
  line-height: 9px;

  svg {
    margin-bottom: 3px;
  }
`;

const SmallTools = styled.div`
  display: grid;
  grid-template-columns: 41px 48px;
  grid-auto-rows: 17px;
  align-content: start;
  padding: 2px 0 0 7px;
`;

const SmallTool = styled.button`
  display: flex;
  align-items: center;
  gap: 3px;
`;

const LetterIcon = styled.b`
  width: 12px;
  font-size: 12px;
  font-weight: 900;
  color: #111;
`;

const ProjectTool = styled.button`
  display: flex;
  flex-direction: column;
  align-items: center;
  flex: 1;
  padding-top: 3px;
  line-height: 9px;
  border-left: 1px solid #dde2dc;

  svg {
    margin-bottom: 3px;
  }
`;

const DimensionTool = styled.button`
  display: flex;
  flex-direction: column;
  align-items: center;
  gap: 3px;
  width: 45px;
  height: 51px;
  padding-top: 3px;
  border: 1px solid #6f9fce;
  background: linear-gradient(#b5d3f0, #a3caef 50%, #b6dbfa);
`;

const Tools = styled.div`
  display: grid;
  grid-template-columns: repeat(${(p) => p.$columns}, 15px);
  grid-auto-rows: 15px;
  align-content: start;
  gap: 2px ${(p) => p.$gap}px;
  margin-left: ${(p) => p.$left || 1}px;
`;

const Tool = styled(PlainButton)`
  background: ${(p) => (p.$active ? "#a8cff2" : "#fbfbfb")};
  border: 1px solid ${(p) => (p.$active ? "#5585b5" : "#d4d4d4")};
`;

const Spacer = styled.div`
  flex: 1;
`;

const Workspace = styled.main`
  flex: 1;
  display: flex;
  position: relative;
`;

const Browser = styled.aside`
  display: flex;
  flex-direction: column;
  width: 168px;
  padding: 4px 0 3px 2px;
  border-top: 1px solid #999;
`;

const Grip = styled.div`
  display: flex;
  align-items: center;
  gap: 2px;
  height: 8px;

  i {
    flex: 1;
    height: 4px;
    border: solid #aaa;
    border-width: 1px 0;
  }
  button {
    color: #111;
    font-weight: 900;
    line-height: 6px;
  }
`;

const BrowserTitle = styled.div`
  display: flex;
  align-items: center;
  gap: 4px;
  height: 14px;
  padding-left: 5px;
  color: #fff;
  font-size: 9px;
  font-weight: 700;
  background: #808080;
`;

const HelpTag = styled.button`
  width: 8px;
  height: 10px;
  margin-left: auto;
  background: #ffffc0;
  color: #111;
  line-height: 10px;
`;

const BrowserTools = styled.div`
  display: flex;
  align-items: center;
  gap: 5px;
  height: 20px;
  padding-left: 3px;
  color: #111;
`;

const Divider = styled.i`
  width: 1px;
  height: 12px;
  margin-right: 1px;
  background: #bbb;
`;

const Tree = styled.ul`
  flex: 1;
  margin: 0;
  padding: 0;
  list-style: none;
  background: #fdfdfd;
  border: 1px solid #777;
  border-right: 0;
`;

const TreeItem = styled.li`
  display: flex;
  align-items: center;
  gap: 1px;
  height: 13px;
  padding-left: ${(p) => (p.$root ? "3px" : "5px")};
  background: ${(p) => (p.$shade ? "#ebeadc" : "#fdfdfd")};
`;

const Branch = styled.i`
  position: relative;
  align-self: stretch;
  width: 11px;

  &::before {
    content: "";
    position: absolute;
    left: 2px;
    top: 0;
    width: 8px;
    height: ${(p) => (p.$last ? "6px" : "13px")};
    border-left: 1px solid #999;
  }
  &::after {
    content: "${(p) => (p.$expand ? "+" : "")}";
    position: absolute;
    left: ${(p) => (p.$expand ? "-1px" : "3px")};
    top: ${(p) => (p.$expand ? "3px" : "6px")};
    width: 7px;
    height: ${(p) => (p.$expand ? "7px" : "1px")};
    border: solid #999;
    border-width: ${(p) => (p.$expand ? "1px" : "1px 0 0")};
    background: #ebeadc;
    font-style: normal;
    line-height: 5px;
    text-align: center;
  }
`;

const CanvasArea = styled.section`
  position: relative;
  flex: 1;
  min-width: 0;
  min-height: 400px;
  margin-left: 6px;
  overflow: hidden;
  isolation: isolate;
  background: #326192;
  border-right: 2px solid #e8e8e8;
  border-bottom: 2px solid #e8e8e8;
`;

const DrawingSvg = styled.svg`
  position: absolute;
  inset: 0;
  width: 100%;
  height: 100%;
`;

const ViewButtons = styled.div`
  position: absolute;
  top: 6px;
  right: 3px;
  display: flex;
  gap: 6px;
  color: #d4dbe2;
`;

const ViewCube = styled.button`
  position: absolute;
  top: 36px;
  right: 18px;
  width: 31px;
  height: 31px;
  background: #8ea3be;
  border: 1px solid #a8b7ca;
  box-shadow: 0 1px 2px #234a75;
  color: #4d607b;
  font-size: 7px;
  font-weight: 700;
`;

const NavBar = styled.div`
  position: absolute;
  top: 85px;
  right: 0;
  display: flex;
  flex-direction: column;
  align-items: center;
  gap: 5px;
  width: 23px;
  height: 156px;
  background: rgba(165, 188, 212, 0.6);

  small {
    align-self: flex-end;
    margin-right: 2px;
    font-size: 8px;
    line-height: 8px;
    color: #4c6684;
  }
  hr {
    width: 18px;
    margin: 2px 0;
    border: 0;
    border-top: 1px solid #6c8bab;
  }
`;

const Dialog = styled.form`
  position: absolute;
  left: 89px;
  top: 48px;
  width: 128px;
  padding: 0 2px 2px;
  border-radius: 4px 4px 0 0;
  background: #0b31b5;
`;

const DialogTitle = styled.div`
  display: flex;
  align-items: center;
  justify-content: space-between;
  height: 20px;
  margin: 0 -2px;
  padding: 2px 4px 0 5px;
  border-radius: 4px 4px 0 0;
  background: linear-gradient(#2c7cf0, #0b50d8 5px, #0a4fe0 16px, #0734b4);
  color: #fff;
  font-size: 10px;
  font-weight: 700;
  white-space: nowrap;
`;

const CloseDialog = styled(PlainButton)`
  width: 15px;
  height: 15px;
  border: 1px solid #fff;
  border-radius: 2px;
  background: #dc4a2a;
  color: #fff;
`;

const DialogBody = styled.div`
  display: flex;
  gap: 4px;
  height: 17px;
  padding: 1px 2px;
  background: #ecebdf;
`;

const ValueBox = styled.div`
  display: flex;
  align-items: center;
  flex: 1;
  border: 1px solid #8aa2bd;
  background: #fff;

  input {
    width: 13px;
    padding-left: 3px;
    outline: 0;
  }
  i {
    flex: 1;
    height: 9px;
    border-left: 1px solid #222;
  }
  button {
    width: 11px;
    height: 13px;
    background: #c3d3f7;
    color: #233b70;
    font-size: 12px;
    font-weight: 900;
    line-height: 10px;
  }
`;

const Accept = styled(PlainButton)`
  width: 16px;
  border: 1px solid #54759b;
  border-radius: 2px;
  background: #f7f7f2;
`;

const Highlight = styled.svg`
  position: absolute;
  left: 46px;
  top: 46px;
  mix-blend-mode: multiply;
  pointer-events: none;
`;

const Frame = styled.div`
  position: absolute;
  inset: -5px 0 -5px 168px;
  border: solid #ff0000;
  border-width: 5px 0 5px 6px;
  pointer-events: none;
`;

const Status = styled.footer`
  display: flex;
  align-items: center;
  height: 13px;
  padding: 0 13px 0 1px;
  background: linear-gradient(#c9c9c0, #deded5 40%, #b8b8af);
`;

const Needed = styled.span`
  margin-left: auto;
  padding-right: 3px;
`;

const Count = styled.span`
  width: 27px;
  padding-left: 5px;
  border-left: 1px solid #aaa;
`;

const Meter = styled.i`
  width: 12px;
  height: 10px;
  background: linear-gradient(90deg, #188018 4px, #111 4px);
`;

const Taskbar = styled.footer`
  display: flex;
  align-items: stretch;
  height: 20px;
  background: linear-gradient(#2c68cf, #3c8af0 2px, #245bdc 5px, #2259d8 17px, #1b47ae);
  color: #fff;
`;

const Start = styled.button`
  display: flex;
  align-items: center;
  gap: 3px;
  width: 72px;
  padding-left: 6px;
  border-radius: 0 8px 8px 0;
  background: linear-gradient(#51a54e, #67bb62 2px, #3a933a 6px, #39943a 16px, #236b25);
  font-size: 13px;
  font-style: italic;
  font-weight: 900;
  text-shadow: 1px 1px 1px #184d18;
`;

const Task = styled.button`
  display: flex;
  align-items: center;
  gap: 3px;
  width: 112px;
  margin: 2px 0 0 7px;
  padding-left: 6px;
  border-radius: 2px;
  background: #1a4cb6;
  box-shadow: inset 1px 1px 1px #123681;
  white-space: nowrap;
`;

const Language = styled.span`
  align-self: center;
  margin-left: auto;
  padding-right: 8px;
`;

const Tray = styled.div`
  display: flex;
  align-items: center;
  gap: 3px;
  width: 78px;
  background: linear-gradient(#1574ca, #1ba0f2 3px, #128fe6 16px, #0d68bc);
  border-left: 1px solid #0c59b0;

  time {
    margin: 0 10px 0 auto;
  }
`;

const TrayArrow = styled.button`
  width: 11px;
  height: 11px;
  margin-left: -6px;
  border-radius: 50%;
  background: #3a9bf2;
  border: 1px solid #a5d5fb;
  font-weight: 900;
  line-height: 8px;
`;
